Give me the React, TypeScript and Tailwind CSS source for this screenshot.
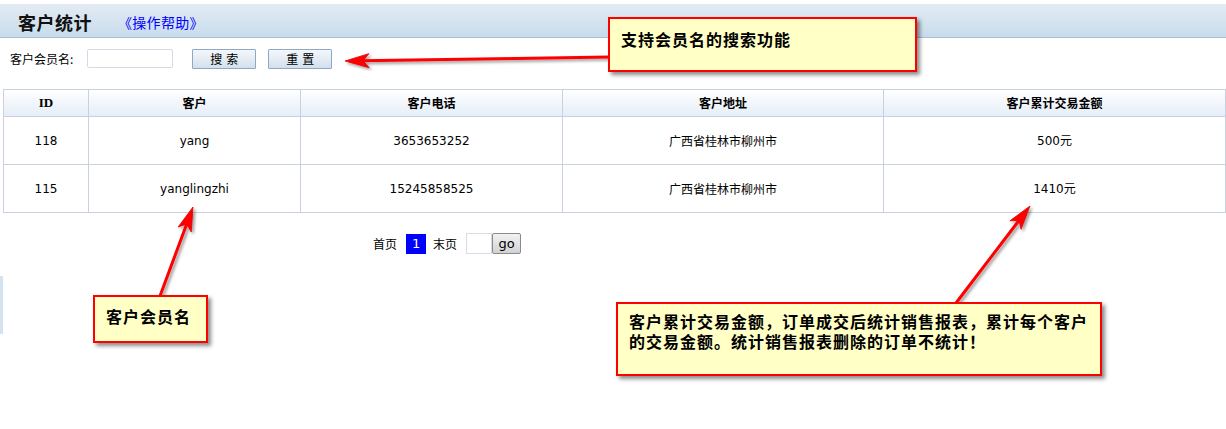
import React from "react";

type Pt = [number, number];

function arrowHead(s: Pt, t: Pt, L = 24, W = 7, notch = 6) {
  const dx = t[0] - s[0];
  const dy = t[1] - s[1];
  const len = Math.hypot(dx, dy);
  const ux = dx / len;
  const uy = dy / len;
  const nx = -uy;
  const ny = ux;
  const p1: Pt = [t[0] - L * ux + W * nx, t[1] - L * uy + W * ny];
  const p2: Pt = [t[0] - (L - notch) * ux, t[1] - (L - notch) * uy];
  const p3: Pt = [t[0] - L * ux - W * nx, t[1] - L * uy - W * ny];
  return `${t[0]},${t[1]} ${p1[0]},${p1[1]} ${p2[0]},${p2[1]} ${p3[0]},${p3[1]}`;
}

function Arrow({ s, t }: { s: Pt; t: Pt }) {
  const dx = t[0] - s[0];
  const dy = t[1] - s[1];
  const len = Math.hypot(dx, dy);
  const e: Pt = [t[0] - (dx / len) * 16, t[1] - (dy / len) * 16];
  return (
    <g filter="url(#ash)">
      <line x1={s[0]} y1={s[1]} x2={e[0]} y2={e[1]} stroke="#ff0000" strokeWidth={3} strokeLinecap="round" />
      <polygon points={arrowHead(s, t)} fill="#ff0000" stroke="#e00000" strokeWidth={0.8} strokeLinejoin="round" />
    </g>
  );
}

const cjk = "font-['SimSun','Noto_Sans_CJK_SC',sans-serif]";
const data = "font-['DejaVu_Sans','Noto_Sans_CJK_SC',sans-serif]";

const rows = [
  { id: "118", name: "yang", phone: "3653653252", addr: "广西省桂林市柳州市", amt: "500元" },
  { id: "115", name: "yanglingzhi", phone: "15245858525", addr: "广西省桂林市柳州市", amt: "1410元" },
];

export default function App() {
  return (
    <div className={`relative w-[1226px] h-[429px] overflow-hidden bg-white text-black ${cjk}`}>
      {/* header band */}
      <div className="mt-[4px] h-[34px] flex items-center bg-[linear-gradient(#e3ecf4,#c8dbeb)] border-b border-[#a6c0d8]">
        <span className="ml-[18px] mt-[3px] text-[18px] font-bold tracking-[0.5px] text-[#111]">客户统计</span>
        <span className="ml-[26px] text-[14px] text-[#0000ff] mt-[4px] tracking-[0.3px]">《操作帮助》</span>
      </div>

      {/* search row */}
      <div className="mt-[5px] h-[31px] flex items-center">
        <span className="ml-[10px] text-[12px]">客户会员名:</span>
        <input className="ml-[14px] w-[86px] h-[19px] border border-[#d4dbe4] rounded-[2px] outline-none bg-white" />
        <button className="ml-[19px] w-[64px] h-[20px] border border-[#8ea9c8] bg-[linear-gradient(#f4f7fb,#d3e0ec)] text-[12px] leading-none tracking-[4px] pl-[4px] rounded-[1px]">
          搜索
        </button>
        <button className="ml-[12px] w-[64px] h-[20px] border border-[#8ea9c8] bg-[linear-gradient(#f4f7fb,#d3e0ec)] text-[12px] leading-none tracking-[4px] pl-[4px] rounded-[1px]">
          重置
        </button>
      </div>

      {/* table */}
      <table className="mt-[15px] ml-[3px] w-[1223px] table-fixed border-collapse text-[12px]">
        <colgroup>
          <col className="w-[85px]" />
          <col className="w-[212px]" />
          <col className="w-[262px]" />
          <col className="w-[321px]" />
          <col />
        </colgroup>
        <thead>
          <tr className="h-[27px] bg-[linear-gradient(#ffffff,#e4edf8)]">
            {["ID", "客户", "客户电话", "客户地址", "客户累计交易金额"].map((h) => (
              <th key={h} className="border border-[#c9d0e0] font-bold text-[12px] text-center">
                {h === "ID" ? <span className="font-['Liberation_Serif',serif] text-[13px]">ID</span> : h}
              </th>
            ))}
          </tr>
        </thead>
        <tbody>
          {rows.map((r) => (
            <tr key={r.id} className="h-[48px]">
              <td className={`border border-[#c9d0e0] text-center ${data}`}>{r.id}</td>
              <td className={`border border-[#c9d0e0] text-center ${data}`}>{r.name}</td>
              <td className={`border border-[#c9d0e0] text-center ${data}`}>{r.phone}</td>
              <td className="border border-[#c9d0e0] text-center">{r.addr}</td>
              <td className={`border border-[#c9d0e0] text-center ${data}`}>{r.amt}</td>
            </tr>
          ))}
        </tbody>
      </table>

      {/* pagination */}
      <div className="mt-[20px] flex items-center text-[12px]">
        <span className="ml-[373px]">首页</span>
        <span className={`ml-[9px] w-[20px] h-[20px] bg-[#0000ff] text-white flex items-center justify-center text-[13px] ${data}`}>1</span>
        <span className="ml-[7px]">末页</span>
        <input className="ml-[9px] w-[26px] h-[21px] border border-[#d6dde6] outline-none" />
        <button className={`w-[29px] h-[21px] border border-[#8a8a8a] rounded-[2px] bg-[linear-gradient(#f2f2f2,#d2d2d2)] text-[13px] leading-none ${data}`}>
          go
        </button>
      </div>

      {/* left edge fragment */}
      <div className="absolute left-0 top-[276px] w-[3px] h-[58px] bg-[#d3e3ef]" />

      {/* arrows */}
      <svg className="absolute inset-0 pointer-events-none" width={1226} height={429}>
        <defs>
          <filter id="ash" x="-20%" y="-20%" width="140%" height="140%">
            <feDropShadow dx="2" dy="2" stdDeviation="1.5" floodColor="#000" floodOpacity="0.4" />
          </filter>
        </defs>
        <Arrow s={[610, 57]} t={[345, 61]} />
        <Arrow s={[160, 296]} t={[193, 207]} />
        <Arrow s={[956, 303]} t={[1030, 206]} />
      </svg>

      {/* callouts */}
      <div className="absolute left-[608px] top-[17px] w-[309px] h-[55px] border-2 border-[#ff0000] bg-[#ffffc6] shadow-[3px_3px_4px_rgba(0,0,0,0.45)] pl-[11px] pt-[8px]">
        <span className="text-[16px] font-bold tracking-[1px] leading-[20px]">支持会员名的搜索功能</span>
      </div>
      <div className="absolute left-[93px] top-[295px] w-[115px] h-[48px] border-2 border-[#ff0000] bg-[#ffffc6] shadow-[3px_3px_4px_rgba(0,0,0,0.45)] pl-[11px] pt-[7px]">
        <span className="text-[16px] font-bold tracking-[1px] leading-[20px]">客户会员名</span>
      </div>
      <div className="absolute left-[616px] top-[302px] w-[486px] h-[74px] border-2 border-[#ff0000] bg-[#ffffc6] shadow-[3px_3px_4px_rgba(0,0,0,0.45)] pl-[11px] pt-[7px] pr-[8px]">
        <p className="text-[16px] font-bold tracking-[1px] leading-[20px]">
          客户累计交易金额，订单成交后统计销售报表，累计每个客户的交易金额。统计销售报表删除的订单不统计！
        </p>
      </div>
    </div>
  );
}
